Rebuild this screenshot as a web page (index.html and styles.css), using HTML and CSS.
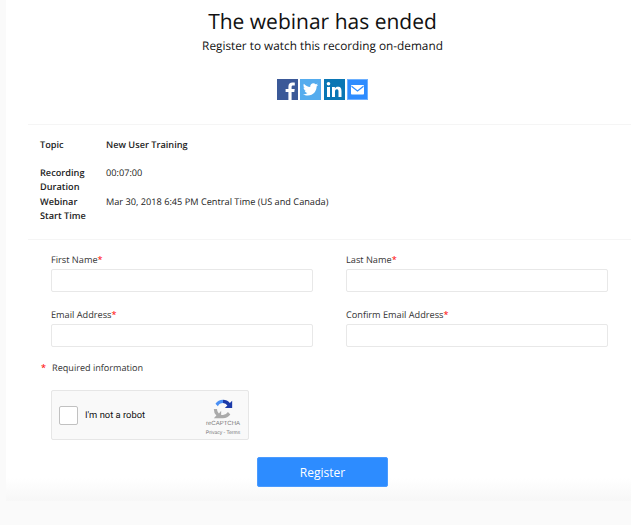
FILE: index.html
```html
<!DOCTYPE html>
<html lang="en">
<head>
<meta charset="utf-8">
<title>The webinar has ended</title>
<link rel="stylesheet" href="styles.css">
</head>
<body>
<main class="card">
  <h1 class="title">The webinar has ended</h1>
  <p class="subtitle">Register to watch this recording on-demand</p>
  <div class="share">
    <svg class="icon" viewBox="0 0 21 21"><rect width="21" height="21" fill="#3b5998"/><path d="M14.6 21v-8h2.7l.4-3.1h-3.1V8c0-.9.3-1.5 1.600-1.500h1.600V3.700c-.3 0-1.300-.1-2.400-.1-2.400 0-4 1.400-4 4.100v2.200H8.600V13h2.800v8z" fill="#fff"/></svg>
    <svg class="icon" viewBox="0 0 21 21"><rect width="21" height="21" fill="#55acee"/><path d="M18 5.700c-.6.300-1.200.400-1.800.500.600-.4 1.100-1 1.400-1.700-.6.400-1.300.600-2 .8-.6-.6-1.400-1-2.300-1-1.700 0-3.100 1.400-3.100 3.100 0 .2 0 .5.100.7-2.600-.1-4.900-1.400-6.400-3.300-.3.500-.4 1-.4 1.600 0 1.100.6 2 1.400 2.600-.5 0-1-.2-1.400-.4 0 1.500 1.100 2.800 2.500 3.100-.5.100-.9.100-1.400.1.400 1.200 1.500 2.100 2.900 2.100-1.100.8-2.400 1.300-3.900 1.300H3c1.400.9 3 1.400 4.800 1.400 5.700 0 8.800-4.700 8.800-8.800v-.4c.6-.4 1.100-1 1.400-1.700z" fill="#fff"/></svg>
    <svg class="icon" viewBox="0 0 21 21"><rect width="21" height="21" fill="#0976b4"/><rect x="3" y="8" width="3" height="10" fill="#fff"/><circle cx="4.500" cy="4.800" r="1.800" fill="#fff"/><path d="M8 8h2.900v1.400c.5-.9 1.500-1.600 3-1.600 3 0 3.600 1.900 3.600 4.500V18h-3v-5c0-1.200 0-2.700-1.600-2.700s-1.900 1.300-1.900 2.600V18H8z" fill="#fff"/></svg>
    <svg class="icon" viewBox="0 0 21 21"><rect width="21" height="21" fill="#2d8cff"/><rect x=".5" y=".5" width="20" height="20" fill="none" stroke="#6db0ff"/><rect x="4" y="6" width="13" height="9.500" rx=".8" fill="#fff"/><path d="M4.500 7.200l6 4.800 6-4.800" fill="none" stroke="#2d8cff" stroke-width="1.200"/></svg>
  </div>
  <section class="details">
    <div class="row">
      <span class="key">Topic</span>
      <span class="value strong">New User Training</span>
    </div>
    <div class="row row-duration">
      <span class="key">Recording Duration</span>
      <span class="value">00:07:00</span>
    </div>
    <div class="row row-start">
      <span class="key">Webinar Start Time</span>
      <span class="value">Mar 30, 2018 6:45 PM Central Time (US and Canada)</span>
    </div>
  </section>
  <form class="form">
    <div class="fields">
      <label class="field">
        <span class="label">First Name<span class="req">*</span></span>
        <input class="input" type="text">
      </label>
      <label class="field">
        <span class="label">Last Name<span class="req">*</span></span>
        <input class="input" type="text">
      </label>
      <label class="field">
        <span class="label">Email Address<span class="req">*</span></span>
        <input class="input" type="text">
      </label>
      <label class="field">
        <span class="label">Confirm Email Address<span class="req">*</span></span>
        <input class="input" type="text">
      </label>
    </div>
    <p class="required"><span class="req star">*</span>Required information</p>
    <div class="captcha">
      <span class="checkbox"></span>
      <span class="robot">I'm not a robot</span>
      <div class="brand">
        <svg class="recaptcha" viewBox="0 0 24 24">
          <path d="M12 2a10 10 0 0 1 7.500 3.400L22 3v8h-8l2.800-2.800A6.500 6.500 0 0 0 12 5.500z" fill="#1c3aa9"/>
          <path d="M12 2a10 10 0 0 0-8.200 4.300L6.400 9A6.500 6.500 0 0 1 12 5.500z" fill="#4a90f5"/>
          <path d="M2 12h3.500c0 1.900.8 3.600 2.100 4.800L10 14v8H2l2.800-2.800A10 10 0 0 1 2 12zM10 22h2c3.300 0 6.200-1.600 8-4l-2.600-2.600A6.500 6.500 0 0 1 12 18.500h-2z" fill="#ababab"/>
        </svg>
        <span class="brand-name">reCAPTCHA</span>
        <span class="brand-links">Privacy - Terms</span>
      </div>
    </div>
    <div class="actions">
      <button class="submit" type="button">Register</button>
    </div>
  </form>
</main>
</body>
</html>
```

FILE: styles.css
```css
* {
  box-sizing: border-box;
}

html,
body {
  height: 100%;
}

body {
  margin: 0;
  background: #fafafa;
  font-family: "Open Sans", "Liberation Sans", sans-serif;
  color: #333;
  overflow: hidden;
  text-rendering: geometricPrecision;
}

.card {
  margin-left: 6px;
  height: 501px;
  padding: 6px 0 0 22px;
  background: linear-gradient(#fff 478px, #f7f7f7 501px);
}

.title {
  margin: 0 0 0 -14px;
  font-size: 21px;
  line-height: 32px;
  font-weight: 400;
  color: #111;
  text-align: center;
}

.subtitle {
  margin: 0 0 0 -14px;
  font-size: 11.8px;
  line-height: 16px;
  color: #111;
  text-align: center;
}

.share {
  display: flex;
  justify-content: center;
  gap: 2.5px;
  margin: 25px 0 0 -14px;
  height: 21px;
}

.icon {
  width: 21px;
  height: 21px;
  display: block;
}

.details {
  margin-top: 24px;
  padding: 13px 0 17px 12px;
  border-top: 1px solid #f5f5f5;
  border-bottom: 1px solid #f5f5f5;
  font-size: 9.2px;
  line-height: 13.5px;
  color: #222;
}

.row {
  display: flex;
}

.row-duration {
  margin-top: 14.5px;
}

.row-start {
  margin-top: 2px;
}

.key {
  width: 66px;
  padding-right: 14px;
  font-weight: 600;
}

.value.strong {
  font-weight: 600;
}

.form {
  padding: 12px 0 0;
}

.fields {
  display: grid;
  grid-template-columns: 262px 262px;
  column-gap: 33px;
  row-gap: 15px;
  margin-left: 23px;
}

.field {
  display: block;
}

.label {
  display: block;
  font-size: 9.2px;
  line-height: 14px;
  padding-top: 1px;
  margin-bottom: 2px;
  color: #333;
}

.req {
  color: #f00;
}

.input {
  display: block;
  width: 100%;
  height: 23px;
  background: #fff;
  border: 1px solid #e8e8e8;
  border-radius: 2px;
  outline: none;
}

.required {
  margin: 14px 0 0 13px;
  font-size: 9.1px;
  line-height: 14px;
}

.star {
  margin-right: 6px;
}

.captcha {
  display: flex;
  align-items: center;
  width: 198px;
  height: 50px;
  margin: 15px 0 0 23px;
  padding-left: 7px;
  background: #f9f9f9;
  border: 1px solid #e6e6e6;
  border-radius: 2px;
}

.checkbox {
  width: 19px;
  height: 19px;
  background: #fff;
  border: 1px solid #c1c1c1;
  border-radius: 2px;
}

.robot {
  margin-left: 7px;
  font-family: Roboto, "Liberation Sans", sans-serif;
  font-size: 9.4px;
  color: #111;
}

.brand {
  display: flex;
  flex-direction: column;
  align-items: center;
  margin-left: auto;
  width: 46px;
  margin-right: 2px;
  padding-top: 5px;
}

.recaptcha {
  width: 22px;
  height: 22px;
}

.brand-name {
  font-family: "Liberation Sans", sans-serif;
  font-size: 6px;
  line-height: 9px;
  color: #777;
}

.brand-links {
  font-family: "Liberation Sans", sans-serif;
  font-size: 5px;
  line-height: 9px;
  color: #777;
}

.actions {
  display: flex;
  justify-content: center;
  margin: 17px 0 0 -14px;
}

.submit {
  width: 131px;
  height: 30px;
  padding: 0;
  background: #2d8cff;
  border: 1px solid #4a9bff;
  border-radius: 2px;
  font-family: inherit;
  font-size: 12px;
  font-weight: 500;
  color: #fff;
}
```
